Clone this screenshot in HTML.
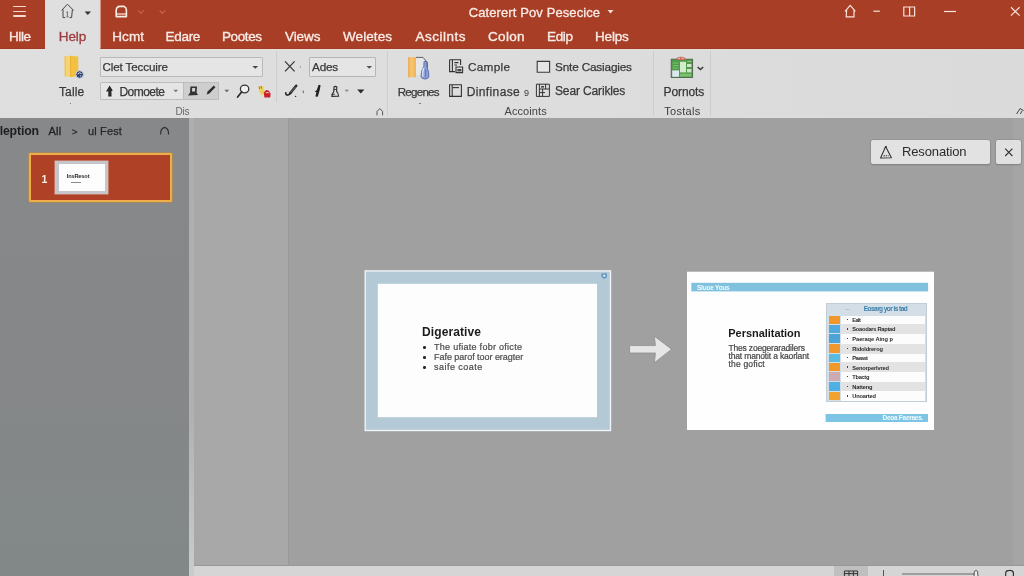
<!DOCTYPE html>
<html lang="en"><head><meta charset="utf-8"><title>Presentation</title>
<style>
html,body{margin:0;padding:0;}
body{will-change:transform;width:1024px;height:576px;overflow:hidden;position:relative;background:#9E9E9E;font-family:"Liberation Sans",sans-serif;}
.r{position:absolute;display:block;}
.t{position:absolute;display:block;white-space:nowrap;}
</style></head><body>
<div class="r" style="left:0.00px;top:48.00px;width:1024.00px;height:70.00px;background:linear-gradient(90deg,#DFDFDF 0%,#DDDDDD 55%,#DADADA 100%);"></div>
<div class="r" style="left:0.00px;top:0.00px;width:1024.00px;height:48.50px;background:#A93E26;border-bottom:1px solid #9C3A25;box-sizing:border-box;"></div>
<div class="r" style="left:0.00px;top:48.50px;width:1024.00px;height:1.50px;background:linear-gradient(180deg,rgba(248,220,212,.9),rgba(240,225,220,0));"></div>
<div class="r" style="left:45.30px;top:0.00px;width:54.70px;height:50.00px;background:#DFDFDF;"></div>
<svg class="r" style="left:44px;top:-1px" width="3" height="51"><rect x="1.00" y="1.00" width="1.00" height="48.60" fill="#F3D5CB"/></svg>
<svg class="r" style="left:98px;top:-1px" width="4" height="51"><rect x="1.60" y="1.00" width="1.00" height="48.60" fill="#F0CFC4"/></svg>
<div class="r" style="left:0.00px;top:118.00px;width:188.50px;height:458.00px;background:linear-gradient(180deg,#87888A 0%,#858789 60%,#828888 100%);"></div>
<div class="r" style="left:188.50px;top:118.00px;width:5.00px;height:458.00px;background:linear-gradient(180deg,#AEAEAE 0%,#B1B1B1 65%,#CBCBCB 100%);"></div>
<div class="r" style="left:193.50px;top:118.00px;width:94.70px;height:447.00px;background:#A8A8A8;"></div>
<div class="r" style="left:288.20px;top:118.00px;width:724.80px;height:447.00px;background:#9FA09F;border-left:1px solid #999999;box-sizing:border-box;"></div>
<div class="r" style="left:1013.00px;top:118.00px;width:11.00px;height:447.00px;background:#A5A5A5;"></div>
<div class="r" style="left:193.50px;top:565.00px;width:830.50px;height:11.00px;background:#D5D5D5;border-top:1px solid #989898;box-sizing:border-box;"></div>
<span class="t" style="left:468.75px;top:5px;font-size:13px;line-height:15px;color:#F7EBE6;letter-spacing:0.10px;-webkit-text-stroke:0.3px #F7EBE6;">Caterert Pov Pesecice</span>
<svg class="r" style="left:606px;top:8px" width="10" height="8" viewBox="0 0 10 8"><path d="M1.5 2 L4.5 5.6 L7.5 2 Z" fill="#F3DDD5"/></svg>
<div class="r" style="left:13.00px;top:5.70px;width:13.30px;height:1.60px;background:#F3D9D0;border-radius:1px;"></div>
<div class="r" style="left:13.00px;top:10.80px;width:13.30px;height:1.60px;background:#F3D9D0;border-radius:1px;"></div>
<div class="r" style="left:13.00px;top:15.40px;width:13.30px;height:1.60px;background:#F3D9D0;border-radius:1px;"></div>
<span class="t" style="left:9.00px;top:29px;font-size:13.5px;line-height:15px;color:#F7EBE6;letter-spacing:-0.42px;-webkit-text-stroke:0.35px #F7EBE6;">Hlle</span>
<span class="t" style="left:58.75px;top:29px;font-size:13.5px;line-height:15px;color:#9E3C40;letter-spacing:-0.09px;-webkit-text-stroke:0.35px #9E3C40;">Help</span>
<span class="t" style="left:112.25px;top:29px;font-size:13.5px;line-height:15px;color:#F7EBE6;letter-spacing:0.08px;-webkit-text-stroke:0.35px #F7EBE6;">Hcmt</span>
<span class="t" style="left:165.40px;top:29px;font-size:13.5px;line-height:15px;color:#F7EBE6;letter-spacing:-0.26px;-webkit-text-stroke:0.35px #F7EBE6;">Edare</span>
<span class="t" style="left:222.00px;top:29px;font-size:13.5px;line-height:15px;color:#F7EBE6;letter-spacing:-0.41px;-webkit-text-stroke:0.35px #F7EBE6;">Pootes</span>
<span class="t" style="left:285.00px;top:29px;font-size:13.5px;line-height:15px;color:#F7EBE6;letter-spacing:-0.07px;-webkit-text-stroke:0.35px #F7EBE6;">Views</span>
<span class="t" style="left:343.00px;top:29px;font-size:13.5px;line-height:15px;color:#F7EBE6;letter-spacing:0.08px;-webkit-text-stroke:0.35px #F7EBE6;">Weletes</span>
<span class="t" style="left:415.50px;top:29px;font-size:13.5px;line-height:15px;color:#F7EBE6;letter-spacing:0.50px;-webkit-text-stroke:0.35px #F7EBE6;">Ascilnts</span>
<span class="t" style="left:488.00px;top:29px;font-size:13.5px;line-height:15px;color:#F7EBE6;letter-spacing:0.31px;-webkit-text-stroke:0.35px #F7EBE6;">Colon</span>
<span class="t" style="left:547.00px;top:29px;font-size:13.5px;line-height:15px;color:#F7EBE6;letter-spacing:-0.34px;-webkit-text-stroke:0.35px #F7EBE6;">Edip</span>
<span class="t" style="left:595.00px;top:29px;font-size:13.5px;line-height:15px;color:#F7EBE6;letter-spacing:-0.19px;-webkit-text-stroke:0.35px #F7EBE6;">Helps</span>
<svg class="r" style="left:58px;top:1px" width="36" height="20" viewBox="0 0 36 20"><path d="M3.6 9.4 L9.4 3.2 L15.6 9.4 M5 8.4 L5 16.6 L7.2 16.6 M14.4 8.4 L13.6 16.6 L11.6 16.6" fill="none" stroke="#444" stroke-width="1"/><path d="M9.4 10.6 L9.4 15.6 M8.4 11.6 L9.4 10.6 M8.4 15.8 L10.6 15.8" fill="none" stroke="#555" stroke-width="0.8"/><path d="M26.6 10.4 L29.8 14 L33 10.4 Z" fill="#333"/></svg>
<svg class="r" style="left:112px;top:3px" width="60" height="18" viewBox="0 0 60 18"><path d="M4.2 13.6 L4.2 7.2 Q4.4 3.6 8.2 3.4 L12.2 3.4 Q14.4 4.4 14.4 7 L14.4 13.6 Z" fill="none" stroke="#FBEDE6" stroke-width="1.6" stroke-linejoin="round"/><path d="M4.6 11 L14 11" stroke="#FBEDE6" stroke-width="1.2"/><path d="M26 7.4 L28.8 10.4 L31.6 7.4" fill="none" stroke="#C4654F" stroke-width="1.3"/><path d="M47.6 7.4 L50.4 10.4 L53.2 7.4" fill="none" stroke="#C4654F" stroke-width="1.3"/></svg>
<svg class="r" style="left:840px;top:0px" width="184" height="24" viewBox="0 0 184 24"><g fill="none" stroke="#F7E4DC" stroke-width="1.2"><path d="M5 11.4 L10.2 5.4 L15.4 11.4 M6.6 10 L6.2 16.8 L14 16.8 L14 10"/><path d="M33.4 11.2 L39.8 11.2"/><path d="M63.8 7 L74.6 7 L74.6 16 L63.8 16 Z M69.6 7 L69.6 16"/><path d="M104 11.5 L116 11.5"/><path d="M171 7.2 L179.6 15.6 M179.6 7.2 L171 15.6"/></g></svg>
<div class="r" style="left:276.10px;top:50.50px;width:1.00px;height:51.50px;background:#CDCDCD;"></div>
<div class="r" style="left:387.20px;top:50.50px;width:1.00px;height:65.50px;background:#CDCDCD;"></div>
<div class="r" style="left:653.10px;top:50.50px;width:1.00px;height:65.50px;background:#CDCDCD;"></div>
<div class="r" style="left:710.00px;top:50.50px;width:1.00px;height:65.50px;background:#CDCDCD;"></div>
<svg class="r" style="left:60px;top:54px" width="26" height="28" viewBox="0 0 26 28"><path d="M4.6 2.2 L10 1.8 L10.2 23 L4.8 22.6 Z" fill="#F6D474"/><path d="M10 1.8 L18.2 2.4 L18.4 19 L14 23 L10.2 23 Z" fill="#F2C141"/><path d="M4.6 2.2 L5.6 2.2 L5.8 22.6 L4.8 22.6 Z" fill="#EDBE55"/><path d="M10 1.8 L10.9 1.9 L11.1 23 L10.2 23 Z" fill="#E8B236"/><circle cx="19.6" cy="20.5" r="3.8" fill="#34416C" stroke="#C9D0E0" stroke-width="1"/><path d="M17.6 20 Q19.4 17.8 21.4 19.6" stroke="#E8EDF7" stroke-width="1" fill="none"/><circle cx="20.6" cy="21.8" r="0.9" fill="#8FA0C8"/></svg>
<span class="t" style="left:58.90px;top:85px;font-size:12px;line-height:14px;color:#383838;letter-spacing:0.18px;-webkit-text-stroke:0.25px #383838;">Talle</span>
<div class="r" style="left:69.60px;top:102.60px;width:1.80px;height:0.80px;background:#777;"></div>
<div class="r" style="left:100.00px;top:57.40px;width:163.00px;height:19.60px;background:#E5E5E5;border:1px solid #B9B9B9;box-sizing:border-box;border-radius:1px;"></div>
<span class="t" style="left:102.50px;top:61px;font-size:11.6px;line-height:12px;color:#383838;letter-spacing:-0.11px;-webkit-text-stroke:0.25px #383838;">Clet Teccuire</span>
<svg class="r" style="left:251px;top:64px" width="9" height="7" viewBox="0 0 9 7"><path d="M1.4 2 L4.3 4.8 L7.2 2 Z" fill="#444"/></svg>
<div class="r" style="left:100.00px;top:82.40px;width:119.00px;height:18.00px;background:#E5E5E5;border:1px solid #BDBDBD;box-sizing:border-box;border-radius:1px;"></div>
<div class="r" style="left:182.50px;top:82.40px;width:36.50px;height:18.00px;background:#CECECE;border:1px solid #BDBDBD;box-sizing:border-box;"></div>
<svg class="r" style="left:104px;top:84px" width="12" height="14" viewBox="0 0 12 14"><path d="M5.6 1.6 L8.8 6.4 L7.4 7.2 L7.6 12.4 L4.2 12.6 L4.4 7.6 L2 7.4 Z" fill="#2A2A2A"/></svg>
<span class="t" style="left:119.40px;top:85px;font-size:12px;line-height:14px;color:#383838;letter-spacing:-0.52px;-webkit-text-stroke:0.25px #383838;">Domoete</span>
<svg class="r" style="left:172px;top:88px" width="8" height="6" viewBox="0 0 8 6"><path d="M1.4 1.8 L3.8 4.2 L6.2 1.8 Z" fill="#777"/></svg>
<svg class="r" style="left:186px;top:84px" width="14" height="14" viewBox="0 0 14 14"><path d="M4.4 2.4 L11 2.4 L10.6 8.6 L12 11 L2 11.4 L4 8.8 Z" fill="#333"/><path d="M6.2 4 L9.2 4 L9 7.6 L6 7.6 Z" fill="#D3D3D3"/></svg>
<svg class="r" style="left:204px;top:83px" width="14" height="14" viewBox="0 0 14 14"><path d="M2.6 11.6 L3.6 8.6 L9.8 2.6 L11.4 4.2 L5.4 10.6 Z" fill="#2E2E2E"/></svg>
<svg class="r" style="left:223px;top:88px" width="8" height="6" viewBox="0 0 8 6"><path d="M1.4 1.8 L3.8 4.2 L6.2 1.8 Z" fill="#666"/></svg>
<svg class="r" style="left:235px;top:83px" width="16" height="16" viewBox="0 0 16 16"><ellipse cx="9.6" cy="6" rx="4.2" ry="3.8" fill="#EFEFEF" stroke="#333" stroke-width="1.3"/><path d="M6.6 9 L2.6 14" stroke="#2A2A2A" stroke-width="1.7" stroke-linecap="round"/></svg>
<svg class="r" style="left:257px;top:84px" width="16" height="16" viewBox="0 0 16 16"><path d="M1.4 3.4 Q2 1.6 4 2.2 Q6 1 6.4 3.6 L8 8.4 L5.4 11.4 L2.6 9 Z" fill="#EBD25A"/><path d="M2.2 2.6 L2.6 5 M4.2 2 L4.4 4.6" stroke="#6B5B1A" stroke-width="0.7"/><path d="M6.8 8.6 L9 6 L11.6 6.4 L13.6 9.4 L13.2 13.4 L7.4 13.6 Z" fill="#CC1F2D"/><path d="M8.6 8.6 L12.4 8.8" stroke="#F4C9C9" stroke-width="0.9"/></svg>
<span class="t" style="left:175.60px;top:106px;font-size:10px;line-height:11px;color:#666;letter-spacing:-0.32px;">Dis</span>
<svg class="r" style="left:282px;top:58px" width="22" height="16" viewBox="0 0 22 16"><path d="M3 3.4 L12.6 13.4 M12.6 3.4 L3 13.4" stroke="#333" stroke-width="1.2" fill="none"/><circle cx="18.4" cy="8.8" r="0.6" fill="#777"/></svg>
<div class="r" style="left:308.50px;top:57.40px;width:67.90px;height:20.00px;background:#E5E5E5;border:1px solid #B5B5B5;box-sizing:border-box;border-radius:1px;"></div>
<span class="t" style="left:312.00px;top:60px;font-size:11.8px;line-height:14px;color:#383838;letter-spacing:-0.22px;-webkit-text-stroke:0.25px #383838;">Ades</span>
<svg class="r" style="left:365px;top:64px" width="9" height="7" viewBox="0 0 9 7"><path d="M1.4 2 L4.3 4.8 L7.2 2 Z" fill="#555"/></svg>
<svg class="r" style="left:283px;top:83px" width="24" height="16" viewBox="0 0 24 16"><path d="M13.2 2.8 L7.2 10.2" fill="none" stroke="#2B2B2B" stroke-width="2.6" stroke-linecap="round"/><path d="M7.6 9.8 Q5.6 12.8 3.4 11.8 Q2.4 11 2.8 9.8" fill="none" stroke="#2B2B2B" stroke-width="1.7" stroke-linecap="round"/><path d="M12.6 3.6 L7.8 9.4" stroke="#9a9a9a" stroke-width="0.6"/><circle cx="12.6" cy="13.4" r="0.7" fill="#333"/><path d="M20.2 7.6 L20.4 10.2" stroke="#555" stroke-width="0.9"/></svg>
<svg class="r" style="left:312px;top:83px" width="12" height="16" viewBox="0 0 12 16"><path d="M6.6 1.8 L8.6 2.2 L7.6 7.4 L5.8 13.8 L3.4 13.4 L4.4 9 L2.6 8.8 L4.8 7 Z" fill="#222"/></svg>
<svg class="r" style="left:329px;top:84px" width="12" height="14" viewBox="0 0 12 14"><path d="M5 3 Q6.4 1.6 7.8 3 L7.6 7.4 Q9.6 9.6 9.6 12.2 L2.8 12.4 Q2.8 10 4.8 7.6 Z" fill="none" stroke="#2E2E2E" stroke-width="1.15"/><path d="M2.6 10.4 L6 10.2 M4.6 5.6 L7.6 5.4" stroke="#333" stroke-width="0.9"/></svg>
<svg class="r" style="left:343px;top:88px" width="8" height="6" viewBox="0 0 8 6"><path d="M1.6 1.8 L3.8 4 L6 1.8 Z" fill="#888"/></svg>
<svg class="r" style="left:355px;top:87px" width="12" height="8" viewBox="0 0 12 8"><path d="M2.2 2.6 L5.8 6.6 L9.4 2.6 Z" fill="#2B2B2B"/></svg>
<svg class="r" style="left:375px;top:107px" width="10" height="10" viewBox="0 0 10 10"><path d="M2 8.4 L2 4.4 L4.8 1.6 L7.6 4.4 L7.6 8.4" fill="none" stroke="#555" stroke-width="1"/></svg>
<svg class="r" style="left:406px;top:55px" width="26" height="26" viewBox="0 0 26 26"><path d="M10 2.4 L17 2.4 L21.4 7.4 L21.4 20 L10 20 Z" fill="#E6E6E6"/><path d="M10 2.4 L17 2.4 L21.4 7.4 L21.4 13" fill="none" stroke="#555" stroke-width="0.9"/><path d="M2.3 2.2 L10 2.2 L10 22.2 L2.3 22.2 Z" fill="#F5C36C"/><path d="M2.3 2.2 L3.6 2.2 L3.6 22.2 L2.3 22.2 Z" fill="#EBA94F"/><path d="M7.6 2.2 L10 2.2 L10 22.2 L7.6 22.2 Z" fill="#F2B75C"/><path d="M18 6.4 L20.6 6.4 L20.8 11.6 Q23.4 17.4 22.8 22 Q22.2 24 19.2 24 Q15.4 24 15 21.4 Q14.8 16 17.8 11.4 Z" fill="#8FA2DA" stroke="#4A5EA6" stroke-width="0.8"/><path d="M17.6 13 Q16.2 17.6 16.8 21.6" stroke="#E4EAF8" stroke-width="1.3" fill="none"/><path d="M19.8 14 L19.6 22.6" stroke="#5A6EB4" stroke-width="0.9" fill="none"/></svg>
<span class="t" style="left:397.75px;top:86px;font-size:11.6px;line-height:12px;color:#383838;letter-spacing:-0.76px;-webkit-text-stroke:0.25px #383838;">Regenes</span>
<div class="r" style="left:418.80px;top:102.60px;width:1.80px;height:0.80px;background:#777;"></div>
<svg class="r" style="left:447px;top:57px" width="18" height="18" viewBox="0 0 18 18"><g fill="none" stroke="#333" stroke-width="1.1"><path d="M2.6 2.8 L13.6 2.8 L13.6 8 M2.6 2.8 L2.6 14.6 L8 14.6"/><path d="M5.4 2.8 L5.4 14.4"/><path d="M7.4 5.6 L11.4 5.6 M7.4 8 L10 8"/><path d="M9 10 L15.6 10 L15.6 15.6 L9 15.6 Z"/></g><path d="M10.4 12 L14.4 12 L14.4 14.4 L10.4 14.4 Z" fill="#444"/></svg>
<span class="t" style="left:468.00px;top:60px;font-size:11.8px;line-height:14px;color:#383838;letter-spacing:0.27px;-webkit-text-stroke:0.25px #383838;">Cample</span>
<svg class="r" style="left:447px;top:82px" width="18" height="18" viewBox="0 0 18 18"><g fill="none" stroke="#333" stroke-width="1.1"><path d="M2.6 2.8 L14.4 2.8 L14.4 14.4 L2.6 14.4 Z"/><path d="M5.2 3 L5.2 14.2"/><path d="M5.4 5.6 L12 5.6"/></g></svg>
<span class="t" style="left:466.75px;top:85px;font-size:12px;line-height:14px;color:#383838;letter-spacing:0.37px;-webkit-text-stroke:0.25px #383838;">Dinfinase</span>
<span class="t" style="left:524.00px;top:88px;font-size:9px;line-height:10px;color:#383838;letter-spacing:-0.51px;">9</span>
<svg class="r" style="left:535px;top:59px" width="17" height="16" viewBox="0 0 17 16"><path d="M2.2 2.4 L14.6 2.4 L14.6 13.2 L2.2 13.2 Z" fill="#E6E6E6" stroke="#3A3A3A" stroke-width="1.1"/></svg>
<span class="t" style="left:555.00px;top:60px;font-size:11.8px;line-height:14px;color:#383838;letter-spacing:-0.18px;-webkit-text-stroke:0.25px #383838;">Snte Casiagies</span>
<svg class="r" style="left:534px;top:82px" width="18" height="17" viewBox="0 0 18 17"><g fill="none" stroke="#333" stroke-width="1"><path d="M2.4 2.2 L15.4 2.2 L15.4 14.4 L2.4 14.4 Z"/><path d="M5.4 2.2 L5.4 14.4 M11.6 2.2 L11.6 7 M5.4 7 L15.4 7 M5.4 10.6 L11 10.6 M8.6 7 L8.6 14.4"/></g><path d="M7 4 L10 4 L10 5.6 L7 5.6Z" fill="#444"/></svg>
<span class="t" style="left:555.00px;top:84px;font-size:12px;line-height:14px;color:#383838;letter-spacing:-0.14px;-webkit-text-stroke:0.25px #383838;">Sear Carikles</span>
<span class="t" style="left:504.50px;top:105px;font-size:11px;line-height:12px;color:#444;letter-spacing:0.08px;">Accoints</span>
<svg class="r" style="left:668px;top:55px" width="40" height="26" viewBox="0 0 40 26"><rect x="3.2" y="4.2" width="21.4" height="18.3" fill="#509A49" stroke="#48664A" stroke-width="0.9"/><path d="M8 4.6 Q8.6 1.6 13 1.8 Q17.6 1.6 18 4.8 Q13 6 8 4.6 Z" fill="#C96B5F"/><path d="M10 3.2 L12 3.4 M13.6 3 L15.8 3.4" stroke="#F3DAD4" stroke-width="0.9"/><rect x="4.2" y="15.4" width="6.8" height="6.4" fill="#DCE8F0"/><rect x="12" y="6.8" width="6" height="10.6" fill="#D3EACD"/><rect x="19" y="9" width="4.4" height="3" fill="#CDE6C6"/><rect x="19" y="14" width="4.4" height="3.4" fill="#CDE6C6"/><rect x="12" y="18.6" width="11.4" height="3" fill="#7CC070"/><path d="M4.6 8 L10.6 8 M4.6 10.6 L10.6 10.6 M4.6 13 L10.6 13" stroke="#7DC474" stroke-width="1"/><path d="M19.4 6.4 L23.2 6.4" stroke="#9AD091" stroke-width="1"/><path d="M29.6 12 L32.4 14.6 L35.2 12" fill="none" stroke="#3a3a3a" stroke-width="1.5"/></svg>
<span class="t" style="left:663.60px;top:85px;font-size:12px;line-height:14px;color:#383838;letter-spacing:-0.12px;-webkit-text-stroke:0.25px #383838;">Pornots</span>
<span class="t" style="left:664.25px;top:105px;font-size:11px;line-height:12px;color:#3c3c3c;letter-spacing:0.29px;">Tostals</span>
<svg class="r" style="left:1014px;top:106px" width="10" height="10" viewBox="0 0 10 10"><path d="M2.6 8 L6 2.6 L9.6 4.6 M6.4 8 L8 5" fill="none" stroke="#444" stroke-width="1"/></svg>
<span class="t" style="left:-0.30px;top:124px;font-size:12.3px;line-height:14px;color:#1e1e1e;letter-spacing:-0.17px;font-weight:700;">leption</span>
<span class="t" style="left:48.50px;top:125px;font-size:11px;line-height:12px;color:#1e1e1e;letter-spacing:0.26px;-webkit-text-stroke:0.3px #1e1e1e;">All</span>
<span class="t" style="left:72.00px;top:126px;font-size:9.5px;line-height:11px;color:#2a2a2a;-webkit-text-stroke:0.3px #2a2a2a;">&gt;</span>
<span class="t" style="left:88.00px;top:125px;font-size:11px;line-height:12px;color:#262626;letter-spacing:0.15px;-webkit-text-stroke:0.25px #262626;">ul Fest</span>
<svg class="r" style="left:158px;top:124px" width="14" height="13" viewBox="0 0 14 13"><path d="M2.6 10.4 Q2.4 4.4 6.6 3.4 Q10.8 4.4 10.6 10.4" fill="none" stroke="#2E2E2E" stroke-width="1.2"/></svg>
<div class="r" style="left:29.30px;top:153.20px;width:143.00px;height:49.20px;background:#AE4126;border:2px solid #EDAE4A;box-shadow:0 0 0 0.6px #C08A3A;box-sizing:border-box;border-radius:1px;"></div>
<div class="r" style="left:55.30px;top:161.00px;width:52.60px;height:33.00px;background:#FDFDFD;border:3.5px solid #C6C6CA;border-left-width:4px;border-right-width:3.2px;box-sizing:border-box;box-shadow:0 0 0 0.5px #D9A79A;"></div>
<span class="t" style="left:41.40px;top:173px;font-size:10.5px;line-height:12px;color:#FBEDE6;font-weight:700;">1</span>
<span class="t" style="left:66.70px;top:173px;font-size:5.6px;line-height:6px;color:#2a2a2a;letter-spacing:-0.11px;font-weight:700;">InsResot</span>
<div class="r" style="left:70.50px;top:181.80px;width:10.50px;height:0.80px;background:#8a8a8a;"></div>
<svg class="r" style="left:362px;top:268px" width="251" height="165"><rect x="3.20" y="2.90" width="245.30" height="159.60" fill="#B4C9D6" stroke="#EEF4F7" stroke-width="1.4"/></svg>
<svg class="r" style="left:376px;top:282px" width="222" height="137"><rect x="1.80" y="1.80" width="219.20" height="133.40" fill="#FDFDFD"/></svg>
<svg class="r" style="left:599px;top:271px" width="10" height="10" viewBox="0 0 10 10"><path d="M2.6 2.6 L7.6 2.2 L8 6 L5 8 L2.4 5.6 Z" fill="#5C90BE"/><circle cx="5.2" cy="4.8" r="1.3" fill="#D6E4F0"/></svg>
<span class="t" style="left:422.00px;top:325px;font-size:12px;line-height:14px;color:#1c1c1c;letter-spacing:0.11px;font-weight:700;">Digerative</span>
<span class="t" style="left:434.00px;top:342px;font-size:9px;line-height:10px;color:#4c4c4c;letter-spacing:0.28px;-webkit-text-stroke:0.2px #4c4c4c;">The ufiate fobr oficte</span>
<div class="r" style="left:423.2px;top:346.4px;width:2.4px;height:2.4px;border-radius:50%;background:#2a2a2a"></div>
<span class="t" style="left:434.00px;top:352px;font-size:9px;line-height:10px;color:#4c4c4c;letter-spacing:-0.04px;-webkit-text-stroke:0.2px #4c4c4c;">Fafe parof toor eragter</span>
<div class="r" style="left:423.2px;top:356.4px;width:2.4px;height:2.4px;border-radius:50%;background:#2a2a2a"></div>
<span class="t" style="left:434.00px;top:362px;font-size:9px;line-height:10px;color:#4c4c4c;letter-spacing:0.47px;-webkit-text-stroke:0.2px #4c4c4c;">saife coate</span>
<div class="r" style="left:423.2px;top:366.4px;width:2.4px;height:2.4px;border-radius:50%;background:#2a2a2a"></div>
<svg class="r" style="left:626px;top:332px" width="50" height="36" viewBox="0 0 50 36"><path d="M3.6 13.6 L29.4 13.6 L28.4 4.2 L45.6 17.2 L28.4 30.8 L29.4 21 L3.6 21 Z" fill="#E5E5E5" stroke="#8E8E8E" stroke-width="0.8" stroke-linejoin="round"/></svg>
<svg class="r" style="left:686px;top:270px" width="249" height="161"><rect x="1.00" y="1.70" width="247.00" height="158.30" fill="#FEFEFE"/></svg>
<svg class="r" style="left:690px;top:281px" width="240" height="12"><rect x="1.30" y="1.80" width="236.80" height="8.60" fill="#80C2DE"/></svg>
<span class="t" style="left:697.00px;top:284px;font-size:6.5px;line-height:7px;color:#F2FAFD;letter-spacing:-0.23px;font-weight:700;">Sluoe Yous</span>
<span class="t" style="left:728.30px;top:327px;font-size:11px;line-height:12px;color:#1a1a1a;letter-spacing:-0.04px;font-weight:700;">Persnalitation</span>
<span class="t" style="left:728.50px;top:343px;font-size:8.5px;line-height:10px;color:#444;letter-spacing:-0.18px;-webkit-text-stroke:0.2px #444;">Thes zoegeraradilers</span>
<span class="t" style="left:728.50px;top:351px;font-size:8.5px;line-height:10px;color:#444;letter-spacing:-0.16px;-webkit-text-stroke:0.2px #444;">that manotit a kaorlant</span>
<span class="t" style="left:728.50px;top:359px;font-size:8.5px;line-height:10px;color:#444;letter-spacing:0.19px;-webkit-text-stroke:0.2px #444;">the gofict</span>
<div class="r" style="left:825.80px;top:303.30px;width:101.20px;height:98.30px;background:#D3DEE6;border:0.5px solid #C3CDD4;box-sizing:border-box;"></div>
<span class="t" style="left:845.00px;top:305px;font-size:6px;line-height:6px;color:#666;">...</span>
<span class="t" style="left:863.80px;top:305px;font-size:6.5px;line-height:7px;color:#3B7FAA;letter-spacing:-0.55px;font-weight:700;">Eosarg yor is tad</span>
<div class="r" style="left:841.00px;top:315.80px;width:84.20px;height:8.40px;background:#FCFCFC;"></div>
<div class="r" style="left:829.40px;top:316.20px;width:10.40px;height:7.50px;background:#F0982C;"></div>
<div class="r" style="left:846.6px;top:318.9px;width:1.6px;height:1.6px;background:#444"></div>
<span class="t" style="left:852.30px;top:317px;font-size:5.7px;line-height:6px;color:#2a2a2a;letter-spacing:-0.58px;font-weight:700;">Ealt</span>
<div class="r" style="left:841.00px;top:324.20px;width:84.20px;height:9.80px;background:#E3E3E3;"></div>
<div class="r" style="left:829.40px;top:324.60px;width:10.40px;height:8.90px;background:#52A9DE;"></div>
<div class="r" style="left:846.6px;top:328.0px;width:1.6px;height:1.6px;background:#444"></div>
<span class="t" style="left:852.30px;top:326px;font-size:5.7px;line-height:6px;color:#2a2a2a;letter-spacing:-0.26px;font-weight:700;">Soaodars Raptad</span>
<div class="r" style="left:841.00px;top:334.00px;width:84.20px;height:10.00px;background:#FCFCFC;"></div>
<div class="r" style="left:829.40px;top:334.40px;width:10.40px;height:9.10px;background:#4DA2D6;"></div>
<div class="r" style="left:846.6px;top:337.9px;width:1.6px;height:1.6px;background:#444"></div>
<span class="t" style="left:852.30px;top:336px;font-size:5.7px;line-height:6px;color:#2a2a2a;letter-spacing:-0.04px;font-weight:700;">Paeraqe Aing p</span>
<div class="r" style="left:841.00px;top:344.00px;width:84.20px;height:9.60px;background:#E3E3E3;"></div>
<div class="r" style="left:829.40px;top:344.40px;width:10.40px;height:8.70px;background:#F0982C;"></div>
<div class="r" style="left:846.6px;top:347.7px;width:1.6px;height:1.6px;background:#444"></div>
<span class="t" style="left:852.30px;top:346px;font-size:5.7px;line-height:6px;color:#2a2a2a;letter-spacing:-0.16px;font-weight:700;">Ridoldrerog</span>
<div class="r" style="left:841.00px;top:353.60px;width:84.20px;height:8.80px;background:#FCFCFC;"></div>
<div class="r" style="left:829.40px;top:354.00px;width:10.40px;height:7.90px;background:#5BBAE0;"></div>
<div class="r" style="left:846.6px;top:356.9px;width:1.6px;height:1.6px;background:#444"></div>
<span class="t" style="left:852.30px;top:355px;font-size:5.7px;line-height:6px;color:#2a2a2a;letter-spacing:-0.54px;font-weight:700;">Paeast</span>
<div class="r" style="left:841.00px;top:362.40px;width:84.20px;height:9.60px;background:#E3E3E3;"></div>
<div class="r" style="left:829.40px;top:362.80px;width:10.40px;height:8.70px;background:#F0982C;"></div>
<div class="r" style="left:846.6px;top:366.1px;width:1.6px;height:1.6px;background:#444"></div>
<span class="t" style="left:852.30px;top:365px;font-size:5.7px;line-height:6px;color:#2a2a2a;letter-spacing:-0.16px;font-weight:700;">Senorperlvred</span>
<div class="r" style="left:841.00px;top:372.00px;width:84.20px;height:10.00px;background:#FCFCFC;"></div>
<div class="r" style="left:829.40px;top:372.40px;width:10.40px;height:9.10px;background:#CBAAB4;"></div>
<div class="r" style="left:846.6px;top:375.9px;width:1.6px;height:1.6px;background:#444"></div>
<span class="t" style="left:852.30px;top:374px;font-size:5.7px;line-height:6px;color:#2a2a2a;letter-spacing:-0.30px;font-weight:700;">Tbactg</span>
<div class="r" style="left:841.00px;top:382.00px;width:84.20px;height:9.40px;background:#E3E3E3;"></div>
<div class="r" style="left:829.40px;top:382.40px;width:10.40px;height:8.50px;background:#4FB0E4;"></div>
<div class="r" style="left:846.6px;top:385.6px;width:1.6px;height:1.6px;background:#444"></div>
<span class="t" style="left:852.30px;top:384px;font-size:5.7px;line-height:6px;color:#2a2a2a;letter-spacing:-0.17px;font-weight:700;">Natteng</span>
<div class="r" style="left:841.00px;top:391.40px;width:84.20px;height:9.40px;background:#FCFCFC;"></div>
<div class="r" style="left:829.40px;top:391.80px;width:10.40px;height:8.50px;background:#F3A22E;"></div>
<div class="r" style="left:846.6px;top:395.0px;width:1.6px;height:1.6px;background:#444"></div>
<span class="t" style="left:852.30px;top:393px;font-size:5.7px;line-height:6px;color:#2a2a2a;letter-spacing:-0.19px;font-weight:700;">Unoarted</span>
<svg class="r" style="left:824px;top:413px" width="105" height="10"><rect x="1.60" y="1.00" width="102.40" height="8.00" fill="#7DC5E5"/></svg>
<span class="t" style="left:882.50px;top:414px;font-size:6.5px;line-height:7px;color:#F2FAFD;letter-spacing:-0.27px;font-weight:700;">Deoa Faeraes.</span>
<div class="r" style="left:871.30px;top:140.40px;width:118.30px;height:23.60px;background:#E2E2E2;box-shadow:0 0 0 0.6px #8a8a8a,0 1px 1.5px rgba(0,0,0,.25);border-radius:2px;"></div>
<svg class="r" style="left:878px;top:144px" width="16" height="16" viewBox="0 0 16 16"><path d="M7.6 2.6 L13.4 13.8 L2.6 14 Z" fill="none" stroke="#333" stroke-width="1.1" stroke-linejoin="round"/><path d="M6.8 3.4 Q8 1.2 9 3.2" fill="none" stroke="#333" stroke-width="0.9"/><path d="M5.6 11.8 L10.6 11.8" stroke="#333" stroke-width="1.1" stroke-dasharray="1.4 0.8"/></svg>
<span class="t" style="left:902.00px;top:144px;font-size:13px;line-height:15px;color:#2c2c2c;letter-spacing:-0.14px;">Resonation</span>
<div class="r" style="left:996.20px;top:140.40px;width:24.40px;height:23.60px;background:#E0E0E0;box-shadow:0 0 0 0.6px #8a8a8a,0 1px 1.5px rgba(0,0,0,.25);border-radius:2px;"></div>
<svg class="r" style="left:1002px;top:145px" width="14" height="14" viewBox="0 0 14 14"><path d="M3.2 3.6 L10.4 11 M10.4 3.6 L3.2 11" stroke="#333" stroke-width="1.1" fill="none"/></svg>
<div class="r" style="left:833.50px;top:566.00px;width:34.30px;height:10.00px;background:#BFBFBF;"></div>
<svg class="r" style="left:842px;top:568px" width="18" height="8" viewBox="0 0 18 8"><path d="M2.4 8 L2.4 3 L15.6 3 L15.6 8 M2.4 5.6 L15.6 5.6 M7 3 L7 8 M11.4 3 L11.4 8" fill="none" stroke="#333" stroke-width="1"/></svg>
<div class="r" style="left:882.80px;top:570.30px;width:1.00px;height:5.70px;background:#555;"></div>
<svg class="r" style="left:901px;top:572px" width="78" height="4"><rect x="1.00" y="1.50" width="75.40" height="1.00" fill="#666"/></svg>
<svg class="r" style="left:971px;top:568px" width="10" height="8" viewBox="0 0 10 8"><path d="M3 8 L3.4 3.4 Q5 1.4 6.6 3.4 L7 8" fill="#E8E8E8" stroke="#444" stroke-width="0.9"/></svg>
<svg class="r" style="left:1003px;top:568px" width="13" height="8" viewBox="0 0 13 8"><path d="M2.6 8 L2.8 4.4 Q3.4 2.4 6.4 2.4 Q10 2.2 10.4 4.6 L10.4 8" fill="none" stroke="#333" stroke-width="1.2"/></svg>
</body></html>
